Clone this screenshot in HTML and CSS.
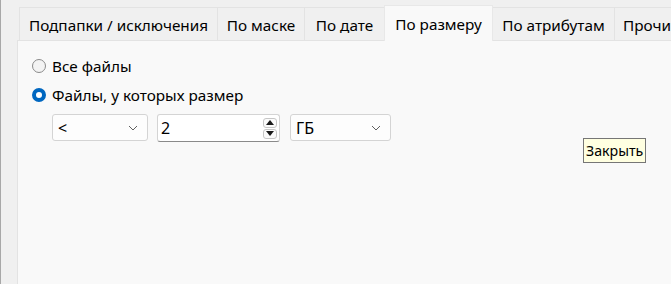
FILE: index.html
```html
<!DOCTYPE html>
<html lang="ru">
<head>
    <meta charset="UTF-8">
    <title>Фильтр файлов</title>
    <link rel="stylesheet" href="styles.css">
</head>
<body>
    <div class="dialog">
        <div class="tabs">
            <div class="tab t1">Подпапки / исключения</div>
            <div class="tab t2">По маске</div>
            <div class="tab t3">По дате</div>
            <div class="tab t4 active">По размеру</div>
            <div class="tab t5">По атрибутам</div>
            <div class="tab t6">Прочие</div>
        </div>
        <div class="panel">
            <label class="radio-row">
                <input type="radio" name="size-mode">
                <span>Все файлы</span>
            </label>
            <label class="radio-row">
                <input type="radio" name="size-mode" checked>
                <span>Файлы, у которых размер</span>
            </label>
            <div class="size-row">
                <div class="combo op">
                    <span>&lt;</span>
                    <svg class="chev" width="10" height="6" viewBox="0 0 10 6"><path d="M1 1 L5 5 L9 1" fill="none" stroke="#606060" stroke-width="1"/></svg>
                </div>
                <div class="spin">
                    <span class="spin-value">2</span>
                    <div class="spin-btns">
                        <div class="spin-btn"><svg width="8" height="5" viewBox="0 0 8 5"><path d="M0 5 L4 0 L8 5 Z" fill="#1a1a1a"/></svg></div>
                        <div class="spin-btn"><svg width="8" height="5" viewBox="0 0 8 5"><path d="M0 0 L4 5 L8 0 Z" fill="#1a1a1a"/></svg></div>
                    </div>
                </div>
                <div class="combo unit">
                    <span>ГБ</span>
                    <svg class="chev" width="10" height="6" viewBox="0 0 10 6"><path d="M1 1 L5 5 L9 1" fill="none" stroke="#606060" stroke-width="1"/></svg>
                </div>
            </div>
            <div class="tooltip">Закрыть</div>
        </div>
    </div>
</body>
</html>
```

FILE: styles.css
```css
html, body { margin: 0; height: 100%; }
body { background: #f0f0f0; font-family: "Noto Sans", "Open Sans", sans-serif; font-size: 15.3px; color: #000; overflow: hidden; }
.dialog { height: 284px; border-left: 1px solid #a8a8a8; box-sizing: border-box; display: flex; flex-direction: column; }

.tabs { display: flex; align-items: flex-end; padding: 5px 0 0 18px; height: 40px; box-sizing: border-box; white-space: nowrap; }
.tab { height: 33px; box-sizing: border-box; border: 1px solid #e3e3e3; border-bottom: none; margin-left: -1px; display: flex; align-items: center; justify-content: center; padding-top: 2px; background: #f0f0f0; flex-shrink: 0; }
.tab:first-child { margin-left: 0; }
.tab.active { height: 36px; margin-bottom: -1px; padding-top: 0; background: #f9f9f9; border-color: #e8e8e8; position: relative; z-index: 1; }
.t1 { width: 199px; }
.t2 { width: 88px; }
.t3 { width: 81px; }
.t4 { width: 109px; }
.t5 { width: 123px; }
.t6 { width: 80px; justify-content: flex-start; padding-left: 8px; }

.panel { flex: 1; margin-left: 16px; background: #f9f9f9; border: 1px solid #e3e3e3; border-right: none; border-bottom: none; padding: 15px 0 0 14px; position: relative; }

.radio-row { display: flex; align-items: center; gap: 6px; height: 20px; margin-bottom: 9px; }
.radio-row input { appearance: none; margin: 0; width: 14px; height: 14px; border-radius: 50%; border: 1px solid #8a8a8a; background: #f3f3f3; box-sizing: border-box; }
.radio-row input:checked { border: 4px solid #0067c0; background: #fff; }

.size-row { display: flex; gap: 9px; margin-left: 20px; font-size: 16px; }
.combo { height: 27px; box-sizing: border-box; border: 1px solid #d4d4d4; border-radius: 3px; background: #fdfdfd; display: flex; align-items: center; justify-content: space-between; padding: 0 9px 0 5px; }
.combo.op { width: 96px; }
.combo.unit { width: 101px; margin-left: 1px; }
.spin { width: 123px; height: 28px; box-sizing: border-box; border: 1px solid #d4d4d4; border-bottom-color: #8a8a8a; border-radius: 3px; background: #fff; display: flex; align-items: center; justify-content: space-between; padding: 0 2px 0 3px; }
.spin-btns { display: flex; flex-direction: column; gap: 1px; }
.spin-btn { width: 14px; height: 10px; box-sizing: border-box; border: 1px solid #c6c6c6; border-radius: 3px; display: flex; align-items: center; justify-content: center; background: #fbfbfb; }

.tooltip { position: absolute; left: 565px; top: 97px; height: 25px; box-sizing: border-box; padding: 0 2px; border: 1px solid #767676; background: #ffffe1; display: flex; align-items: center; font-size: 14.2px; }
```
